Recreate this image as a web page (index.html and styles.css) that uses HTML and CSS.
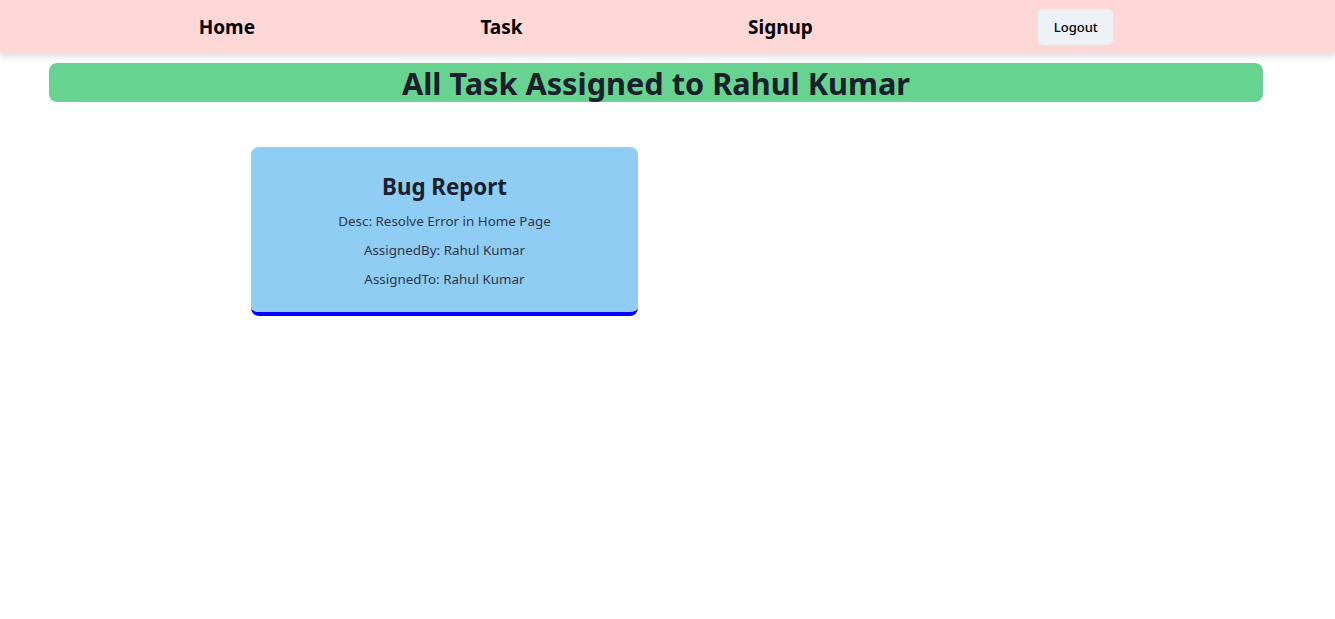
FILE: index.html
```html
<!DOCTYPE html>
<html lang="en">
<head>
<meta charset="utf-8">
<title>Tasks</title>
<link rel="stylesheet" href="styles.css">
</head>
<body>
<nav class="nav">
  <a class="nav-link" href="#">Home</a>
  <a class="nav-link" href="#">Task</a>
  <a class="nav-link" href="#">Signup</a>
  <button class="logout">Logout</button>
</nav>
<h1 class="banner">All Task Assigned to Rahul Kumar</h1>
<main class="tasks">
  <div class="card">
    <h2 class="card-title">Bug Report</h2>
    <p class="card-line">Desc: Resolve Error in Home Page</p>
    <p class="card-line">AssignedBy: Rahul Kumar</p>
    <p class="card-line">AssignedTo: Rahul Kumar</p>
  </div>
</main>
</body>
</html>
```
FILE: styles.css
```css
* { box-sizing: border-box; }
body {
  margin: 0;
  font-family: "Noto Sans", "Open Sans", sans-serif;
  color: #1a202c;
  background: #fff;
}
.nav {
  height: 53px;
  background: #fed7d7;
  box-shadow: 0 4px 6px rgba(0,0,0,0.12);
  display: flex;
  align-items: center;
  justify-content: space-around;
  padding: 0 109px 0 86px;
}
.nav-link {
  color: #000;
  text-decoration: none;
  font-weight: 700;
  font-size: 19px;
}
.logout {
  width: 75px;
  height: 36px;
  border: none;
  border-radius: 5px;
  background: #edf2f7;
  font-family: inherit;
  font-size: 13px;
  font-weight: 500;
  color: #000;
  padding: 0;
}
.banner {
  margin: 10px 72px 0 49px;
  height: 39px;
  line-height: 40px;
  background: #68d391;
  border-radius: 8px;
  text-align: center;
  font-size: 30.7px;
  font-weight: 700;
}
.tasks {
  padding: 45px 0 0 251px;
}
.card {
  width: 387px;
  background: #90cdf4;
  border-radius: 8px;
  border-bottom: 4px solid #0000ff;
  padding: 24px 10px 23px;
  text-align: center;
  display: flex;
  flex-direction: column;
  gap: 9px;
}
.card-title {
  margin: 0 0 -1px;
  font-size: 22.3px;
  line-height: 32px;
  font-weight: 700;
}
.card-line {
  margin: 0;
  font-size: 13.4px;
  line-height: 20px;
  color: #2d3748;
}
```
